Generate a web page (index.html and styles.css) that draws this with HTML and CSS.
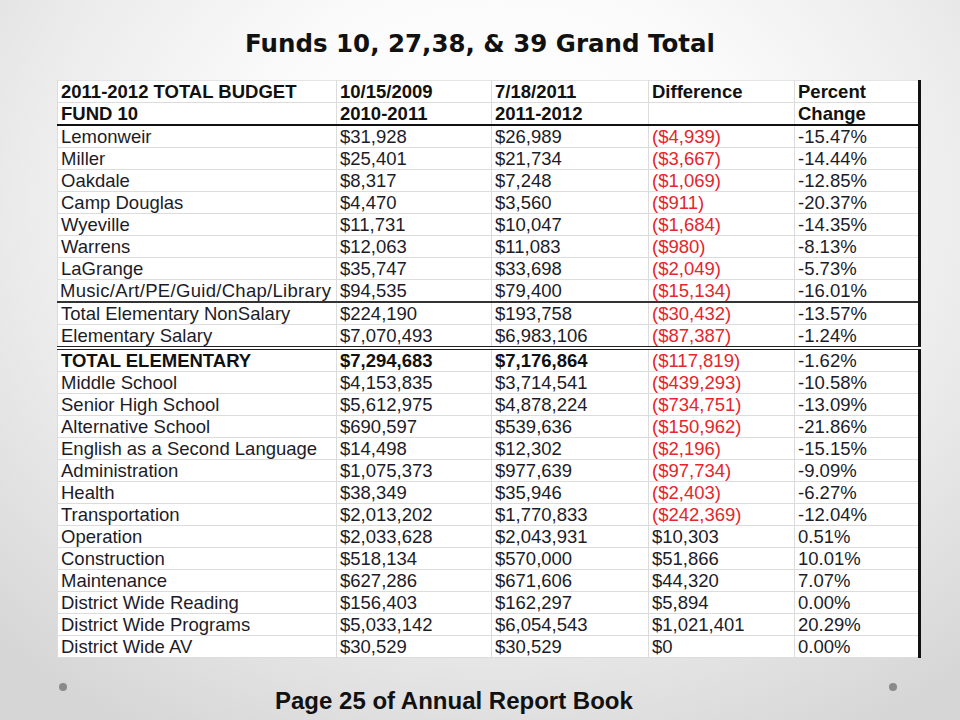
FILE: index.html
```html
<!DOCTYPE html>
<html>
<head>
<meta charset="utf-8">
<link rel="stylesheet" href="styles.css">
</head>
<body>
<div class="slide">
  <h1 class="title">Funds 10, 27,38, &amp; 39 Grand Total</h1>
  <table class="budget">
    <colgroup>
      <col class="c1"><col class="c2"><col class="c3"><col class="c4"><col class="c5">
    </colgroup>
    <tr class="hd"><td>2011-2012 TOTAL BUDGET</td><td>10/15/2009</td><td>7/18/2011</td><td>Difference</td><td>Percent</td></tr>
    <tr class="hd hd-last"><td>FUND 10</td><td>2010-2011</td><td>2011-2012</td><td></td><td>Change</td></tr>
    <tr><td>Lemonweir</td><td>$31,928</td><td>$26,989</td><td class="neg">($4,939)</td><td>-15.47%</td></tr>
    <tr><td>Miller</td><td>$25,401</td><td>$21,734</td><td class="neg">($3,667)</td><td>-14.44%</td></tr>
    <tr><td>Oakdale</td><td>$8,317</td><td>$7,248</td><td class="neg">($1,069)</td><td>-12.85%</td></tr>
    <tr><td>Camp Douglas</td><td>$4,470</td><td>$3,560</td><td class="neg">($911)</td><td>-20.37%</td></tr>
    <tr><td>Wyeville</td><td>$11,731</td><td>$10,047</td><td class="neg">($1,684)</td><td>-14.35%</td></tr>
    <tr><td>Warrens</td><td>$12,063</td><td>$11,083</td><td class="neg">($980)</td><td>-8.13%</td></tr>
    <tr><td>LaGrange</td><td>$35,747</td><td>$33,698</td><td class="neg">($2,049)</td><td>-5.73%</td></tr>
    <tr class="rule"><td class="wide">Music/Art/PE/Guid/Chap/Library</td><td>$94,535</td><td>$79,400</td><td class="neg">($15,134)</td><td>-16.01%</td></tr>
    <tr><td>Total Elementary NonSalary</td><td>$224,190</td><td>$193,758</td><td class="neg">($30,432)</td><td>-13.57%</td></tr>
    <tr class="double"><td>Elementary Salary</td><td>$7,070,493</td><td>$6,983,106</td><td class="neg">($87,387)</td><td>-1.24%</td></tr>
    <tr class="total"><td>TOTAL ELEMENTARY</td><td>$7,294,683</td><td>$7,176,864</td><td class="neg">($117,819)</td><td class="plain">-1.62%</td></tr>
    <tr><td>Middle School</td><td>$4,153,835</td><td>$3,714,541</td><td class="neg">($439,293)</td><td>-10.58%</td></tr>
    <tr><td>Senior High School</td><td>$5,612,975</td><td>$4,878,224</td><td class="neg">($734,751)</td><td>-13.09%</td></tr>
    <tr><td>Alternative School</td><td>$690,597</td><td>$539,636</td><td class="neg">($150,962)</td><td>-21.86%</td></tr>
    <tr><td>English as a Second Language</td><td>$14,498</td><td>$12,302</td><td class="neg">($2,196)</td><td>-15.15%</td></tr>
    <tr><td>Administration</td><td>$1,075,373</td><td>$977,639</td><td class="neg">($97,734)</td><td>-9.09%</td></tr>
    <tr><td>Health</td><td>$38,349</td><td>$35,946</td><td class="neg">($2,403)</td><td>-6.27%</td></tr>
    <tr><td>Transportation</td><td>$2,013,202</td><td>$1,770,833</td><td class="neg">($242,369)</td><td>-12.04%</td></tr>
    <tr><td>Operation</td><td>$2,033,628</td><td>$2,043,931</td><td>$10,303</td><td>0.51%</td></tr>
    <tr><td>Construction</td><td>$518,134</td><td>$570,000</td><td>$51,866</td><td>10.01%</td></tr>
    <tr><td>Maintenance</td><td>$627,286</td><td>$671,606</td><td>$44,320</td><td>7.07%</td></tr>
    <tr><td>District Wide Reading</td><td>$156,403</td><td>$162,297</td><td>$5,894</td><td>0.00%</td></tr>
    <tr><td>District Wide Programs</td><td>$5,033,142</td><td>$6,054,543</td><td>$1,021,401</td><td>20.29%</td></tr>
    <tr><td>District Wide AV</td><td>$30,529</td><td>$30,529</td><td>$0</td><td>0.00%</td></tr>
  </table>
  <div class="footer">
    <span class="dot"></span>
    <p class="caption">Page 25 of Annual Report Book</p>
    <span class="dot"></span>
  </div>
</div>
</body>
</html>
```

FILE: styles.css
```css
html, body {
  margin: 0;
  padding: 0;
}
body {
  width: 960px;
  height: 720px;
  overflow: hidden;
  background: radial-gradient(ellipse 75% 85% at 52% 28%, #ffffff 0%, #fbfbfb 35%, #ececec 65%, #d6d6d6 100%);
}
.slide {
  width: 960px;
  height: 720px;
  display: flex;
  flex-direction: column;
}
.title {
  margin: 0;
  padding-top: 30px;
  height: 80px;
  box-sizing: border-box;
  text-align: center;
  font-family: "DejaVu Sans", sans-serif;
  font-weight: bold;
  font-size: 24.5px;
  line-height: 28px;
  color: #111;
}
.budget {
  margin-left: 57px;
  width: 862px;
  border-collapse: collapse;
  background: #fff;
  font-family: "Liberation Sans", Arial, sans-serif;
  font-size: 18.5px;
  color: #1c1c28;
  table-layout: fixed;
  border-right: 3px solid #111;
  border-left: 1px solid #dedede;
  border-top: 1px solid #e4e4e4;
}
.c1 { width: 279px; }
.c2 { width: 155px; }
.c3 { width: 157px; }
.c4 { width: 146px; }
.c5 { width: 125px; }
.budget td {
  height: 21px;
  padding: 0 0 0 3px;
  line-height: 21px;
  border: 1px solid #dcdcdc;
  white-space: nowrap;
  overflow: hidden;
}
.budget tr:first-child td {
  border-top: none;
}
.budget td:last-child {
  border-right: none;
}
.budget .hd td {
  font-weight: bold;
  color: #111;
}
.budget .hd-last td {
  border-bottom: 2.5px solid #111;
}
.budget .rule td {
  border-bottom: 2px solid #333;
}
.budget .double td {
  border-bottom: 4px double #222;
}
.budget .total td {
  font-weight: bold;
  color: #111;
}
.budget .total td.neg,
.budget .total td.plain {
  font-weight: normal;
}
.budget .total td.plain {
  color: #1c1c28;
}
.budget td.neg {
  color: #e5262c;
}
.budget td.wide {
  padding-left: 2px;
  letter-spacing: 0.3px;
}
.footer {
  display: flex;
  align-items: flex-start;
  margin-top: 25px;
  padding: 0 63px 0 59px;
}
.dot {
  width: 8px;
  height: 8px;
  border-radius: 50%;
  background: #8a8a8a;
  flex: none;
}
.caption {
  flex: 1;
  margin: 0;
  padding: 4px 0 0 208px;
  font-family: "Liberation Sans", Arial, sans-serif;
  font-weight: bold;
  font-size: 24px;
  line-height: 28px;
  color: #111;
}
```
